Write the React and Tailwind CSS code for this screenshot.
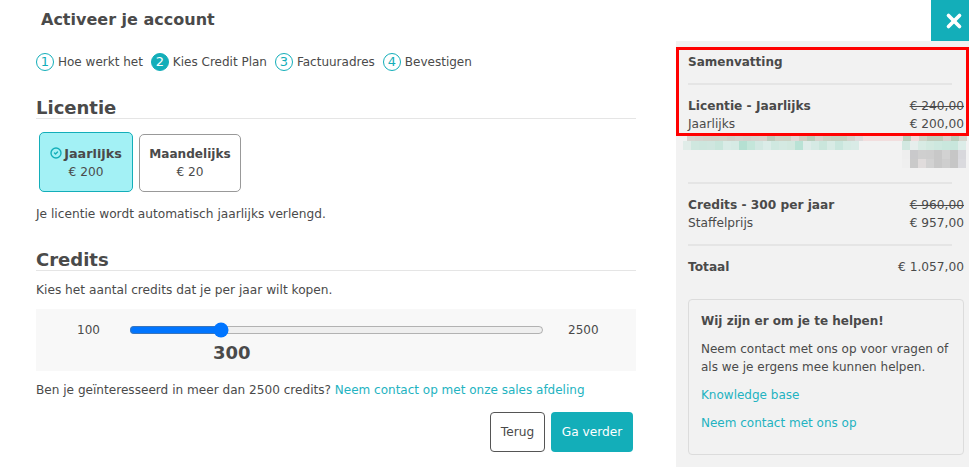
import { CircleCheck, X } from "lucide-react";

const steps = [
  { number: 1, label: "Hoe werkt het" },
  { number: 2, label: "Kies Credit Plan", active: true },
  { number: 3, label: "Factuuradres" },
  { number: 4, label: "Bevestigen" },
];

// blurred-out part of the summary, as in the screenshot
const mosaicRows = [
  {
    height: 5,
    cells: [
      [11, ["#d8d5d0", "#d6d3ce", "#d4d2ca", "#d2d2c8", "#d2d4ca", "#d0d0c8", "#d4d2cc", "#d2d0ca", "#d4d2cc", "#d8d2cc", "#bccabb", "#cfd1c5", "#ccd2c4", "#dfd8d6", "#cfcfc3", "#b9cdbb", "#d6d2cc", "#cad0c2", "#c5d0c0", "#c5d0c0", "#d4d2cc", "#dedadb", "#f2dede", "#f2dede", "#f2dede", "#f2dede", "#f2dede", "#b9cdbb", "#f2dcdc", "#d0d4c8", "#c0ccbc", "#c0ccbc", "#d8d2ce", "#b9cbb9", "#d6d6ce"]],
    ],
  },
  {
    height: 9,
    cells: [
      [7, ["#e0ece8", "#cfe7df", "#cde6de", "#cfe6df", "#c8e5db", "#d9ebe6", "#d6eae4", "#b5e0d2", "#c4e6da", "#d2e8e2", "#dbece8", "#cfe8e0", "#d4e9e2", "#d2e8df", "#b9e2d5", "#deece9", "#d5eae4", "#cae6dc", "#d8ebe5", "#c9e6dd", "#d6ebe4", "#d9ebe6"]],
      [43, ["#d2e8e1", "#e6eeec", "#d8ebe4", "#d2e9e0", "#cde8df", "#c9e7dd", "#c8e6dc", "#dcece8"]],
    ],
  },
  {
    height: 9,
    cells: [[226, ["#eeeeee", "#c9c9cb", "#cfcfcf", "#cecece", "#c8c8c8", "#d2d2d2", "#c6c6c6", "#d8d8dc"]]],
  },
  {
    height: 9,
    cells: [[226, ["#efefef", "#cacaca", "#e0dcdc", "#d2d2d2", "#c8c8c8", "#cecece", "#c6c6c6", "#dadade"]]],
  },
];

const Step = ({ number, label, active }) => (
  <div className="flex items-center gap-1">
    <span
      className={
        active
          ? "flex h-[18px] w-[18px] items-center justify-center rounded-full border border-[#13aeb9] bg-[#13aeb9] text-[13px] text-white"
          : "flex h-[18px] w-[18px] items-center justify-center rounded-full border border-[#13aeb9] text-[13px] text-[#13aeb9]"
      }
    >
      {number}
    </span>
    <span>{label}</span>
  </div>
);

const Heading = ({ children }) => (
  <h2 className="h-[23px] border-b border-[#e5e5e5] text-[18px] leading-[23px] font-bold">{children}</h2>
);

const SummaryRow = ({ title, subtitle, oldPrice, price }) => (
  <div className="mt-3 pl-3 pr-[5px]">
    <div className="flex justify-between">
      <span className="font-bold">{title}</span>
      <span className="line-through">{oldPrice}</span>
    </div>
    <div className="flex justify-between">
      <span>{subtitle}</span>
      <span>{price}</span>
    </div>
  </div>
);

const Divider = ({ className }) => <div className={`ml-3 h-[2px] w-[264px] bg-[#e5e5e5] ${className}`} />;

const Mosaic = () => (
  <div className="mt-[3px] h-[32px] overflow-hidden">
    {mosaicRows.map((row, i) => (
      <div key={i} className="flex" style={{ height: row.height }}>
        {row.cells.map(([offset, colors], j) => (
          <div key={j} className="flex" style={{ marginLeft: offset }}>
            {colors.map((color, k) => (
              <div key={k} className="w-2 shrink-0" style={{ backgroundColor: color }} />
            ))}
          </div>
        ))}
      </div>
    ))}
  </div>
);

export default function App() {
  return (
    <div className="flex h-[467px] w-[969px] overflow-hidden bg-white font-['DejaVu_Sans',sans-serif] text-[12.2px] leading-[18px] text-[#4a4a4a]">
      <main className="w-[676px] shrink-0 pl-9 pr-10 pt-[10px]">
        <h1 className="ml-[5px] text-[16px] leading-5 font-bold">Activeer je account</h1>

        <div className="mt-[23px] flex gap-2 text-[12px]">
          {steps.map((step) => (
            <Step key={step.number} {...step} />
          ))}
        </div>

        <div className="mt-[25px]">
          <Heading>Licentie</Heading>
        </div>

        <div className="mt-[13px] ml-[3px] flex items-end gap-[6px] text-center">
          <div className="h-[60px] w-[94px] rounded-[5px] border border-[#13aeb9] bg-[#a3f1f5] pt-3">
            <div className="flex items-center justify-center gap-[2px] font-bold">
              <CircleCheck size={12} strokeWidth={2.75} className="mb-[3px] text-[#13aeb9]" />
              <span className="text-[12.8px]">Jaarlijks</span>
            </div>
            <div>€ 200</div>
          </div>
          <div className="h-[58px] w-[102px] rounded-[5px] border border-[#999999] pt-[10px]">
            <div className="text-[12.1px] font-bold">Maandelijks</div>
            <div>€ 20</div>
          </div>
        </div>

        <p className="mt-[13px]">Je licentie wordt automatisch jaarlijks verlengd.</p>

        <div className="mt-[25px]">
          <Heading>Credits</Heading>
        </div>

        <p className="mt-[10px]">Kies het aantal credits dat je per jaar wilt kopen.</p>

        <div className="mt-[10px] h-[62px] bg-[#f8f8f8] pt-[13px]">
          <div className="flex h-4 items-center pl-[41px] text-[12px]">
            <span className="w-[52px]">100</span>
            <input type="range" min="0" max="100" defaultValue="21" className="m-0 h-4 w-[415px]" />
            <span className="ml-6">2500</span>
          </div>
          <div className="mt-[5px] ml-[177px] text-[18px] leading-5 font-bold">300</div>
        </div>

        <p className="mt-[10px] text-[12.1px]">
          Ben je geïnteresseerd in meer dan 2500 credits?{" "}
          <a className="text-[12px] text-[#23b3c1]">Neem contact op met onze sales afdeling</a>
        </p>

        <div className="mt-[13px] flex justify-end gap-[6px] pr-[3px]">
          <button className="h-10 w-[55px] rounded-[4px] border border-[#555555] bg-white">Terug</button>
          <button className="h-10 w-[82px] rounded-[4px] bg-[#13aeb9] text-white">Ga verder</button>
        </div>
      </main>

      <div className="flex w-[293px] shrink-0 flex-col">
        <div className="flex h-[41px] justify-end">
          <button className="flex h-[41px] w-[38px] items-center justify-center bg-[#13aeb9] pl-[7px] text-white">
            <X size={22} strokeWidth={4} />
          </button>
        </div>

        <aside className="relative flex-1 bg-[#f2f2f2] pt-3">
          <div className="absolute top-[6px] right-0 left-0 h-[89px] border-[3px] border-[#ff0000]" />

          <h3 className="pl-3 text-[12px] font-bold">Samenvatting</h3>
          <Divider className="mt-3" />

          <SummaryRow title="Licentie - Jaarlijks" subtitle="Jaarlijks" oldPrice="€ 240,00" price="€ 200,00" />
          <Mosaic />

          <Divider className="mt-[14px]" />
          <SummaryRow title="Credits - 300 per jaar" subtitle="Staffelprijs" oldPrice="€ 960,00" price="€ 957,00" />

          <Divider className="mt-3" />
          <div className="mt-3 flex justify-between pl-3 pr-[5px]">
            <span className="font-bold">Totaal</span>
            <span>€ 1.057,00</span>
          </div>

          <div className="mt-[23px] mr-[5px] ml-3 h-[156px] rounded-[4px] border border-[#dcdcdc] pt-3 pl-3 text-[12px]">
            <h4 className="font-bold">Wij zijn er om je te helpen!</h4>
            <p className="mt-[10px]">
              Neem contact met ons op voor vragen of
              <br />
              als we je ergens mee kunnen helpen.
            </p>
            <a className="mt-[10px] block text-[#23b3c1]">Knowledge base</a>
            <a className="mt-[10px] block text-[#23b3c1]">Neem contact met ons op</a>
          </div>
        </aside>
      </div>
    </div>
  );
}
